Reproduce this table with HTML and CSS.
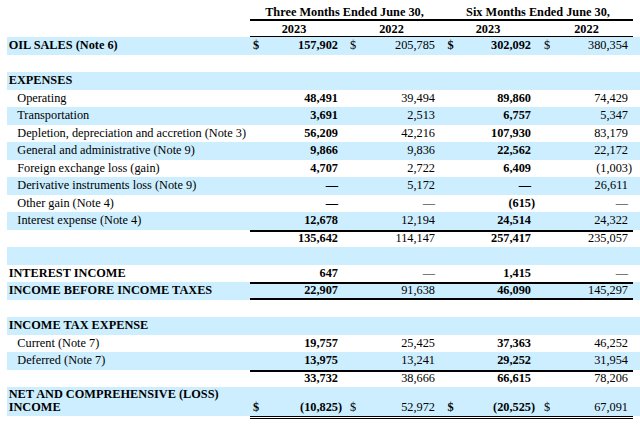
FILE: index.html
```html
<!DOCTYPE html>
<html lang="en">
<head>
<meta charset="utf-8">
<title>Statement of Operations</title>
<link rel="stylesheet" href="styles.css">
</head>
<body>
<div class="stmt">
  <div class="row head1">
    <div class="lab"></div>
    <div class="hvals h1">
      <div class="h3m">Three Months Ended June 30,</div>
      <div class="h6m">Six Months Ended June 30,</div>
    </div>
  </div>
  <div class="row head2">
    <div class="lab"></div>
    <div class="hvals h2">
      <div class="hy">2023</div><div class="hy">2022</div><div class="hy">2023</div><div class="hy">2022</div>
    </div>
  </div>

  <div class="row blue">
    <div class="lab hd">OIL SALES (Note 6)</div>
    <div class="vals">
      <span class="cur ca b">$</span><span class="num b">157,902</span>
      <span class="cur cb">$</span><span class="num">205,785</span>
      <span class="cur cc b">$</span><span class="num b">302,092</span>
      <span class="cur cd">$</span><span class="num last">380,354</span>
    </div>
  </div>
  <div class="row"><div class="lab"></div><div class="vals"></div></div>
  <div class="row blue"><div class="lab hd">EXPENSES</div><div class="vals"></div></div>

  <div class="row">
    <div class="lab sub">Operating</div>
    <div class="vals">
      <span></span><span class="num b">48,491</span>
      <span></span><span class="num">39,494</span>
      <span></span><span class="num b">89,860</span>
      <span></span><span class="num last">74,429</span>
    </div>
  </div>
  <div class="row blue">
    <div class="lab sub">Transportation</div>
    <div class="vals">
      <span></span><span class="num b">3,691</span>
      <span></span><span class="num">2,513</span>
      <span></span><span class="num b">6,757</span>
      <span></span><span class="num last">5,347</span>
    </div>
  </div>
  <div class="row">
    <div class="lab sub">Depletion, depreciation and accretion (Note 3)</div>
    <div class="vals">
      <span></span><span class="num b">56,209</span>
      <span></span><span class="num">42,216</span>
      <span></span><span class="num b">107,930</span>
      <span></span><span class="num last">83,179</span>
    </div>
  </div>
  <div class="row blue">
    <div class="lab sub">General and administrative (Note 9)</div>
    <div class="vals">
      <span></span><span class="num b">9,866</span>
      <span></span><span class="num">9,836</span>
      <span></span><span class="num b">22,562</span>
      <span></span><span class="num last">22,172</span>
    </div>
  </div>
  <div class="row">
    <div class="lab sub">Foreign exchange loss (gain)</div>
    <div class="vals">
      <span></span><span class="num b">4,707</span>
      <span></span><span class="num">2,722</span>
      <span></span><span class="num b">6,409</span>
      <span></span><span class="num last">(1,003<span class="rp">)</span></span>
    </div>
  </div>
  <div class="row blue">
    <div class="lab sub">Derivative instruments loss (Note 9)</div>
    <div class="vals">
      <span></span><span class="num b">—</span>
      <span></span><span class="num">5,172</span>
      <span></span><span class="num b">—</span>
      <span></span><span class="num last">26,611</span>
    </div>
  </div>
  <div class="row">
    <div class="lab sub">Other gain (Note 4)</div>
    <div class="vals">
      <span></span><span class="num b">—</span>
      <span></span><span class="num">—</span>
      <span></span><span class="num b">(615<span class="rp">)</span></span>
      <span></span><span class="num last">—</span>
    </div>
  </div>
  <div class="row blue">
    <div class="lab sub">Interest expense (Note 4)</div>
    <div class="vals">
      <span></span><span class="num b">12,678</span>
      <span></span><span class="num">12,194</span>
      <span></span><span class="num b">24,514</span>
      <span></span><span class="num last">24,322</span>
    </div>
  </div>
  <div class="row">
    <div class="lab"></div>
    <div class="vals top">
      <span></span><span class="num b">135,642</span>
      <span></span><span class="num">114,147</span>
      <span></span><span class="num b">257,417</span>
      <span></span><span class="num last">235,057</span>
    </div>
  </div>
  <div class="row blue"><div class="lab"></div><div class="vals"></div></div>

  <div class="row">
    <div class="lab hd">INTEREST INCOME</div>
    <div class="vals">
      <span></span><span class="num b">647</span>
      <span></span><span class="num">—</span>
      <span></span><span class="num b">1,415</span>
      <span></span><span class="num last">—</span>
    </div>
  </div>
  <div class="row blue">
    <div class="lab hd">INCOME BEFORE INCOME TAXES</div>
    <div class="vals top bottom">
      <span></span><span class="num b">22,907</span>
      <span></span><span class="num">91,638</span>
      <span></span><span class="num b">46,090</span>
      <span></span><span class="num last">145,297</span>
    </div>
  </div>
  <div class="row"><div class="lab"></div><div class="vals"></div></div>
  <div class="row blue"><div class="lab hd">INCOME TAX EXPENSE</div><div class="vals"></div></div>

  <div class="row">
    <div class="lab sub">Current (Note 7)</div>
    <div class="vals">
      <span></span><span class="num b">19,757</span>
      <span></span><span class="num">25,425</span>
      <span></span><span class="num b">37,363</span>
      <span></span><span class="num last">46,252</span>
    </div>
  </div>
  <div class="row blue">
    <div class="lab sub">Deferred (Note 7)</div>
    <div class="vals">
      <span></span><span class="num b">13,975</span>
      <span></span><span class="num">13,241</span>
      <span></span><span class="num b">29,252</span>
      <span></span><span class="num last">31,954</span>
    </div>
  </div>
  <div class="row">
    <div class="lab"></div>
    <div class="vals top">
      <span></span><span class="num b">33,732</span>
      <span></span><span class="num">38,666</span>
      <span></span><span class="num b">66,615</span>
      <span></span><span class="num last">78,206</span>
    </div>
  </div>

  <div class="row blue net">
    <div class="lab hd">NET AND COMPREHENSIVE (LOSS)<br>INCOME</div>
    <div class="vals">
      <span class="cur ca b">$</span><span class="num b">(10,825<span class="rp">)</span></span>
      <span class="cur cb">$</span><span class="num">52,972</span>
      <span class="cur cc b">$</span><span class="num b">(20,525<span class="rp">)</span></span>
      <span class="cur cd">$</span><span class="num last">67,091</span>
    </div>
  </div>
  <div class="dbl"></div>
</div>
</body>
</html>
```

FILE: styles.css
```css
html, body {
  margin: 0;
  padding: 0;
  background: #ffffff;
}

body {
  font-family: "Liberation Serif", "Times New Roman", serif;
  font-size: 12.3px;
  color: #000;
}

.stmt {
  padding: 6px 0 0 6.7px;
}

.row {
  display: flex;
  height: 17.5px;
  line-height: 17.5px;
  white-space: nowrap;
}

.row.blue {
  background: #cceeff;
}

.lab {
  flex: none;
  width: 243.3px;
  box-sizing: border-box;
}

.lab.hd {
  font-weight: bold;
  padding-left: 2px;
}

.lab.sub {
  padding-left: 10.6px;
}

.vals {
  flex: none;
  width: 383.5px;
  display: grid;
  grid-template-columns: 12px 86px 12px 85px 12px 84px 12px 80.5px;
}

.vals.top {
  box-shadow: inset 0 2px 0 #000;
}

.vals.top.bottom {
  box-shadow: inset 0 2px 0 #000, inset 0 -2px 0 #000;
}

.num {
  text-align: right;
  padding-right: 10px;
}

.num.last {
  padding-right: 5.5px;
}

.rp {
  margin-right: -0.333em;
}

.cur.ca { padding-left: 3px; }
.cur.cb { padding-left: 2px; }
.cur.cc { padding-left: 2.5px; }
.cur.cd { padding-left: 3px; }

.b {
  font-weight: bold;
}

/* headers */
.hvals {
  flex: none;
  width: 383.5px;
  display: grid;
  font-weight: bold;
  text-align: center;
}

.head1 {
  height: 15px;
  line-height: 13px;
}

.hvals.h1 {
  grid-template-columns: 195px 188.5px;
  box-shadow: inset 0 -2px 0 #000;
}

.h3m {
  padding: 0 10px 0 4px;
}

.h6m {
  padding: 0 5.5px 0 3px;
}

.head2 {
  height: 16.3px;
  line-height: 14.3px;
}

.hvals.h2 {
  grid-template-columns: 98px 97px 96px 92.5px;
  padding-top: 1px;
  box-sizing: border-box;
  box-shadow: inset 0 -1px 0 #000;
}

.hy {
  padding-right: 10px;
}

.hy:last-child {
  padding-right: 5.5px;
  padding-left: 4px;
}

/* net row */
.row.net {
  height: 28.5px;
  line-height: 13px;
}

.row.net .lab {
  padding-top: 1.2px;
}

.row.net .vals {
  align-items: end;
  padding-bottom: 1.5px;
  box-sizing: border-box;
}

.dbl {
  margin-left: 243.3px;
  width: 383.5px;
  height: 1.3px;
  border-top: 1px solid #000;
  border-bottom: 1px solid #000;
  margin-top: 0.2px;
}
```
